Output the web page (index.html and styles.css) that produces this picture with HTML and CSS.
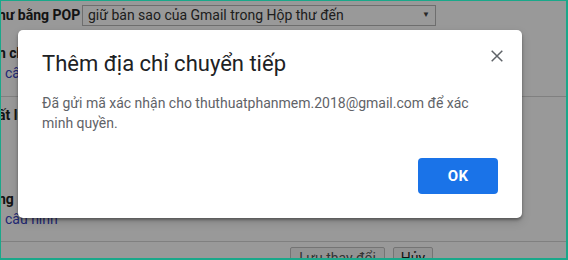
FILE: index.html
```html
<!DOCTYPE html>
<html lang="vi">
<head>
<meta charset="utf-8">
<title>Thêm địa chỉ chuyển tiếp</title>
<link rel="stylesheet" href="styles.css">
</head>
<body>
<div class="frame">
  <div class="page">
    <div class="row-top">
      <span class="label cut">hư bằng POP</span>
      <div class="select">
        <span class="select-text">giữ bản sao của Gmail trong Hộp thư đến</span>
        <span class="select-arrow">▼</span>
      </div>
    </div>
    <div class="section s1">
      <div class="label cut">n chuyển tiếp</div>
      <div class="link-line"><a class="link">cấu hình</a></div>
    </div>
    <div class="section s2">
      <div class="label cut">ất lượng</div>
    </div>
    <div class="section s3">
      <div class="label cut">ng</div>
      <div class="link-line"><a class="link">cấu hình</a></div>
    </div>
    <div class="actions">
      <button class="btn btn-save">Lưu thay đổi</button>
      <button class="btn btn-cancel">Hủy</button>
    </div>
  </div>
  <div class="scrim"></div>
  <div class="dialog" role="dialog">
    <div class="dialog-head">
      <h1 class="dialog-title">Thêm địa chỉ chuyển tiếp</h1>
      <button class="close" aria-label="Đóng">
        <svg width="12" height="12" viewBox="0 0 12 12"><path d="M0.7 0.7 L11.3 11.3 M11.3 0.7 L0.7 11.3" stroke="#5f6368" stroke-width="1.5" fill="none"/></svg>
      </button>
    </div>
    <p class="dialog-body">Đã gửi mã xác nhận cho thuthuatphanmem.2018@gmail.com để xác minh quyền.</p>
    <div class="dialog-actions">
      <button class="ok">OK</button>
    </div>
  </div>
</div>
</body>
</html>
```

FILE: styles.css
```css
html, body {
  margin: 0;
  padding: 0;
  overflow: hidden;
}
body {
  font-family: Roboto, "Liberation Sans", Arial, sans-serif;
  width: 568px;
  height: 260px;
}
.frame {
  position: relative;
  box-sizing: border-box;
  width: 568px;
  height: 260px;
  border-style: solid;
  border-color: #1aa88a;
  border-width: 1px 2px 2px 1px;
  overflow: hidden;
  background: #fff;
}
.page {
  color: #222;
  font-size: 14px;
  line-height: 20px;
}
.label {
  font-weight: bold;
  white-space: nowrap;
}
.cut {
  margin-left: -3px;
}
.row-top {
  display: flex;
  align-items: center;
  margin-top: 4px;
  height: 20px;
}
.row-top .label {
  width: 84px;
  flex: none;
}
.select {
  box-sizing: border-box;
  width: 354px;
  height: 21px;
  border: 1px solid #b8b8b8;
  display: flex;
  align-items: center;
  justify-content: space-between;
  padding: 0 5px 0 5px;
  font-size: 14px;
  color: #333;
}
.select-arrow {
  font-size: 8px;
  color: #444;
}
.section {
  border-bottom: 1px solid #d6d6d6;
}
.s1 {
  padding: 18px 0 13px;
}
.s2 {
  border-bottom: none;
  padding: 8px 0 64px;
}
.s3 {
  padding: 0 0 12px;
}
.link-line {
  padding-left: 4px;
}
.link {
  color: #3a44c4;
}
.actions {
  display: flex;
  align-items: flex-start;
  gap: 8px;
  padding: 5px 0 0 289px;
}
.btn {
  font-family: Roboto, "Liberation Sans", Arial, sans-serif;
  font-size: 14px;
  line-height: 18px;
  height: 22px;
  padding: 0;
  white-space: nowrap;
  background: #f5f5f5;
  border: 1px solid #c2c2c2;
  border-radius: 2px;
  color: #222;
  flex: none;
}
.btn-save {
  width: 95px;
  color: #555;
}
.btn-cancel {
  width: 40px;
}
.scrim {
  position: absolute;
  inset: 0;
  background: rgba(0, 0, 0, 0.4);
}
.dialog {
  position: absolute;
  left: 17px;
  top: 29px;
  width: 504px;
  box-sizing: border-box;
  padding: 20px 24px 24px;
  background: #fff;
  border-radius: 5px;
  box-shadow: 0 2px 3px rgba(0,0,0,0.35), 0 4px 10px rgba(0,0,0,0.15);
}
.dialog-head {
  display: flex;
  justify-content: space-between;
  align-items: flex-start;
}
.dialog-title {
  margin: 0;
  font-family: Roboto, "Open Sans", sans-serif;
  font-weight: 400;
  font-size: 22px;
  line-height: 28px;
  color: #202124;
}
.close {
  width: 24px;
  height: 24px;
  margin: -6px -11px 0 0;
  padding: 0;
  border: none;
  background: none;
  display: flex;
  align-items: center;
  justify-content: center;
}
.dialog-body {
  margin: 15px 0 0;
  font-size: 14px;
  line-height: 20px;
  color: #5f6368;
}
.dialog-actions {
  display: flex;
  justify-content: flex-end;
  margin-top: 25px;
}
.ok {
  width: 80px;
  height: 36px;
  border: none;
  border-radius: 4px;
  background: #1a73e8;
  color: #fff;
  font-family: Roboto, sans-serif;
  font-weight: bold;
  font-size: 15px;
  letter-spacing: 0.3px;
}
```
